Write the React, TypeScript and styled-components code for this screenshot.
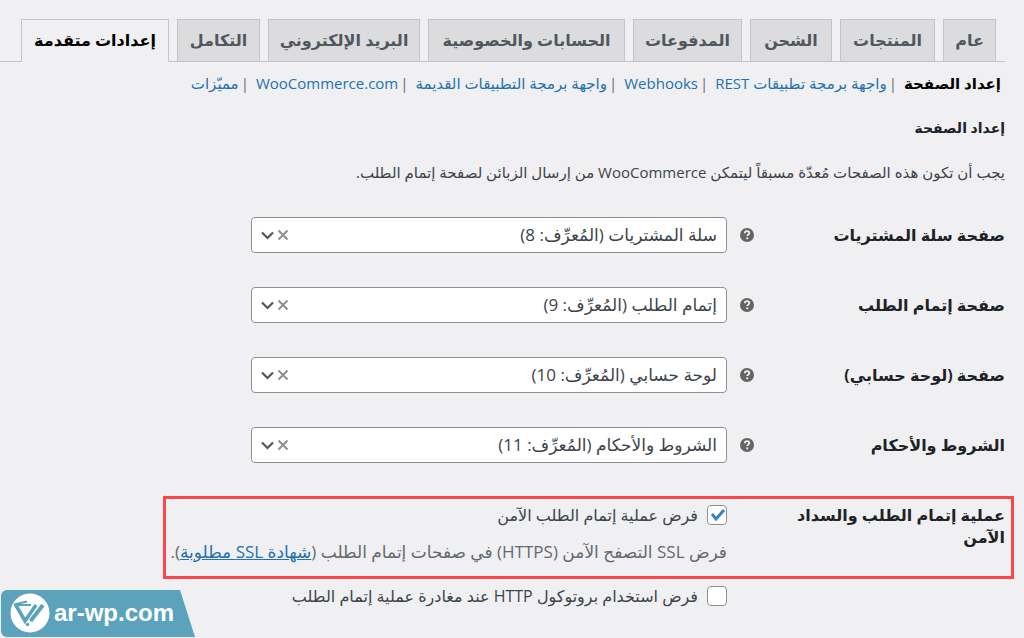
import React from "react";
import styled, { createGlobalStyle } from "styled-components";

const GlobalStyle = createGlobalStyle`
  *, *::before, *::after { box-sizing: border-box; }
  body {
    margin: 0;
    background: #f0f0f2;
    color: #3c434a;
    font-family: "Open Sans", "DejaVu Sans", sans-serif;
    font-size: 15px;
    line-height: 22px;
  }
`;

const Page = styled.main`
  position: relative;
  min-height: 100vh;
  padding-top: 19px;
  overflow: hidden;
`;

const Tabs = styled.nav`
  display: flex;
  gap: 8px;
  margin-right: 19px;
  padding: 0 9px;
  border-bottom: 1px solid #c3c4c7;
`;

const Tab = styled.a<{ $active?: boolean; $width: number }>`
  flex: 0 1 ${(p) => p.$width}px;
  height: 43px;
  margin-bottom: -1px;
  border: 1px solid #c3c4c7;
  border-bottom-color: ${(p) => (p.$active ? "#f0f0f2" : "#c3c4c7")};
  background: ${(p) => (p.$active ? "#f0f0f2" : "#dcdcde")};
  color: ${(p) => (p.$active ? "#000" : "#50575e")};
  font-size: 16px;
  font-weight: 700;
  line-height: 41px;
  text-align: center;
  text-decoration: none;
  white-space: nowrap;
`;

const SubNav = styled.ul`
  display: flex;
  margin: 10px 23px 0 0;
  padding: 0;
  list-style: none;
  white-space: nowrap;
`;

const SubItem = styled.li`
  & + &::before {
    content: "|";
    margin: 0 7px 0 2px;
    color: #646970;
  }
`;

const SubLink = styled.a<{ $current?: boolean }>`
  color: ${(p) => (p.$current ? "#000" : "#2271b1")};
  font-weight: ${(p) => (p.$current ? 700 : 400)};
  text-decoration: none;
`;

const Form = styled.form`
  padding: 0 19px;
`;

const Heading = styled.h2`
  margin: 23px 0 0;
  color: #1d2327;
  font-size: 14px;
  line-height: 22px;
`;

const Intro = styled.p`
  margin: 22px 0 0;
`;

const Rows = styled.div`
  display: grid;
  gap: 34px;
  margin-top: 34px;
`;

const Row = styled.div`
  display: flex;
  align-items: center;
`;

const Label = styled.label`
  flex: 0 0 250px;
  padding-left: 30px;
  color: #1d2327;
  font-size: 16px;
  font-weight: 700;
`;

const Help = styled.button`
  flex: 0 0 28px;
  height: 16px;
  padding: 0;
  border: 0;
  background: none;
  color: #646464;

  svg { display: block; }
`;

const SelectBox = styled.div`
  display: flex;
  flex: 0 1 476px;
  align-items: center;
  gap: 2px;
  height: 36px;
  padding: 0 9px;
  border: 1px solid #8c8f94;
  border-radius: 4px;
  background: #fff;
`;

const Select = styled.select`
  flex: 1;
  min-width: 0;
  height: 34px;
  padding: 0;
  border: 0;
  appearance: none;
  background: none;
  color: #3c434a;
  font: inherit;
  font-size: 17px;
`;

const Clear = styled.button`
  width: 12px;
  height: 14px;
  padding: 0;
  border: 0;
  background: none;
  color: #8f8f8f;

  svg { display: block; }
`;

const Chevron = styled.svg`
  width: 14px;
  height: 14px;
  color: #50575e;
`;

const Highlight = styled.section`
  display: flex;
  max-width: 851px;
  height: 83px;
  margin: 33px -9px 0 0;
  padding: 5px 6px;
  border: 3px solid #fb464c;
`;

const GroupTitle = styled.h3`
  flex: 0 0 250px;
  margin: 0;
  padding-left: 30px;
  color: #1d2327;
  font-size: 16px;
  line-height: 22px;
`;

const Options = styled.div`
  padding-right: 28px;
  white-space: nowrap;
`;

const CheckLabel = styled.label`
  display: flex;
  align-items: center;
  gap: 9px;
  font-size: 16px;
`;

const Checkbox = styled.input`
  width: 20px;
  height: 20px;
  margin: 0;
  border: 1px solid #8c8f94;
  border-radius: 4px;
  appearance: none;
  background: #fff;

  &:checked {
    background: #fff
      url("data:image/svg+xml,%3Csvg xmlns='http://www.w3.org/2000/svg' viewBox='0 0 18 18'%3E%3Cpath d='M4 8l4 5 8-9' fill='none' stroke='%233582c4' stroke-width='3'/%3E%3C/svg%3E");
  }
`;

const Description = styled.p`
  margin: 15px 0 0;
  color: #646970;
  font-size: 17px;

  a { color: #2271b1; }
`;

const LastRow = styled.div`
  margin-top: 6px;
  padding-right: 278px;
  white-space: nowrap;
`;

const Watermark = styled.div`
  position: absolute;
  bottom: 1px;
  left: 1px;
  display: flex;
  align-items: center;
  gap: 4px;
  width: 194px;
  height: 47px;
  padding: 0 0 2px 9px;
  border-radius: 6px 0 0 6px;
  background: #5ba3bd;
  clip-path: polygon(0 0, 179px 0, 100% 100%, 0 100%);
  color: #fff;
  direction: ltr;
  font-family: "Liberation Sans", sans-serif;
  font-size: 24px;
  font-weight: 700;
`;

const tabs = [
  { text: "عام", width: 53 },
  { text: "المنتجات", width: 95 },
  { text: "الشحن", width: 82 },
  { text: "المدفوعات", width: 109 },
  { text: "الحسابات والخصوصية", width: 197 },
  { text: "البريد الإلكتروني", width: 152 },
  { text: "التكامل", width: 83 },
  { text: "إعدادات متقدمة", width: 148, active: true },
];

const sections = [
  "إعداد الصفحة",
  "واجهة برمجة تطبيقات REST",
  "Webhooks",
  "واجهة برمجة التطبيقات القديمة",
  "WooCommerce.com",
  "مميّزات",
];

const pages = [
  { id: "cart", label: "صفحة سلة المشتريات", value: "سلة المشتريات (المُعرِّف: 8)" },
  { id: "checkout", label: "صفحة إتمام الطلب", value: "إتمام الطلب (المُعرِّف: 9)" },
  { id: "account", label: "صفحة (لوحة حسابي)", value: "لوحة حسابي (المُعرِّف: 10)" },
  { id: "terms", label: "الشروط والأحكام", value: "الشروط والأحكام (المُعرِّف: 11)" },
];

function PageField({ id, label, value }: { id: string; label: string; value: string }) {
  return (
    <Row>
      <Label htmlFor={id}>{label}</Label>
      <Help type="button" aria-label="مساعدة">
        <svg width="16" height="16" viewBox="0 0 16 16">
          <circle cx="8" cy="8" r="7" fill="currentColor" />
          <path d="M5.8 6.3c0-1.4 1-2.1 2.2-2.1s2.3.7 2.3 1.9c0 1.5-2 1.5-2 3" fill="none" stroke="#f0f0f2" strokeWidth="1.8" />
          <circle cx="8.2" cy="11.3" r="1.1" fill="#f0f0f2" />
        </svg>
      </Help>
      <SelectBox>
        <Select id={id} defaultValue={value}>
          <option>{value}</option>
        </Select>
        <Clear type="button" aria-label="إزالة">
          <svg width="12" height="14" viewBox="0 0 12 14">
            <path d="M1.5 2.5l9 9M10.5 2.5l-9 9" stroke="currentColor" strokeWidth="2" />
          </svg>
        </Clear>
        <Chevron viewBox="0 0 14 14">
          <path d="M1 4.5L6.500 10 12 4.500" fill="none" stroke="currentColor" strokeWidth="2.2" />
        </Chevron>
      </SelectBox>
    </Row>
  );
}

export default function App() {
  return (
    <Page dir="rtl" lang="ar">
      <GlobalStyle />
      <Tabs>
        {tabs.map((t) => (
          <Tab key={t.text} href="#" $active={t.active} $width={t.width}>
            {t.text}
          </Tab>
        ))}
      </Tabs>
      <SubNav>
        {sections.map((s, i) => (
          <SubItem key={s}>
            <SubLink href="#" $current={i === 0}>
              {s}
            </SubLink>
          </SubItem>
        ))}
      </SubNav>
      <Form>
        <Heading>إعداد الصفحة</Heading>
        <Intro>يجب أن تكون هذه الصفحات مُعدّة مسبقاً ليتمكن WooCommerce من إرسال الزبائن لصفحة إتمام الطلب.</Intro>
        <Rows>
          {pages.map((p) => (
            <PageField key={p.id} {...p} />
          ))}
        </Rows>
        <Highlight>
          <GroupTitle>عملية إتمام الطلب والسداد الآمن</GroupTitle>
          <Options>
            <CheckLabel>
              <Checkbox type="checkbox" defaultChecked />
              فرض عملية إتمام الطلب الآمن
            </CheckLabel>
            <Description>
              فرض SSL التصفح الآمن (HTTPS) في صفحات إتمام الطلب (<a href="#">شهادة SSL مطلوبة</a>).
            </Description>
          </Options>
        </Highlight>
        <LastRow>
          <CheckLabel>
            <Checkbox type="checkbox" />
            فرض استخدام بروتوكول HTTP عند مغادرة عملية إتمام الطلب
          </CheckLabel>
        </LastRow>
      </Form>
      <Watermark>
        <svg width="40" height="40" viewBox="0 0 40 40">
          <circle cx="20" cy="20" r="19.5" fill="#fff" />
          <g fill="none" stroke="#5ba3bd">
            <path d="M4 11.5L17 8.5M5 12h16" strokeWidth="2" />
            <path d="M5.5 11.5L15 28 26 12" strokeWidth="3.6" />
            <path d="M20.5 28L33 12" strokeWidth="4" />
          </g>
          <circle cx="17.5" cy="31.5" r="1.8" fill="#5ba3bd" />
        </svg>
        <span>ar-wp.com</span>
      </Watermark>
    </Page>
  );
}
